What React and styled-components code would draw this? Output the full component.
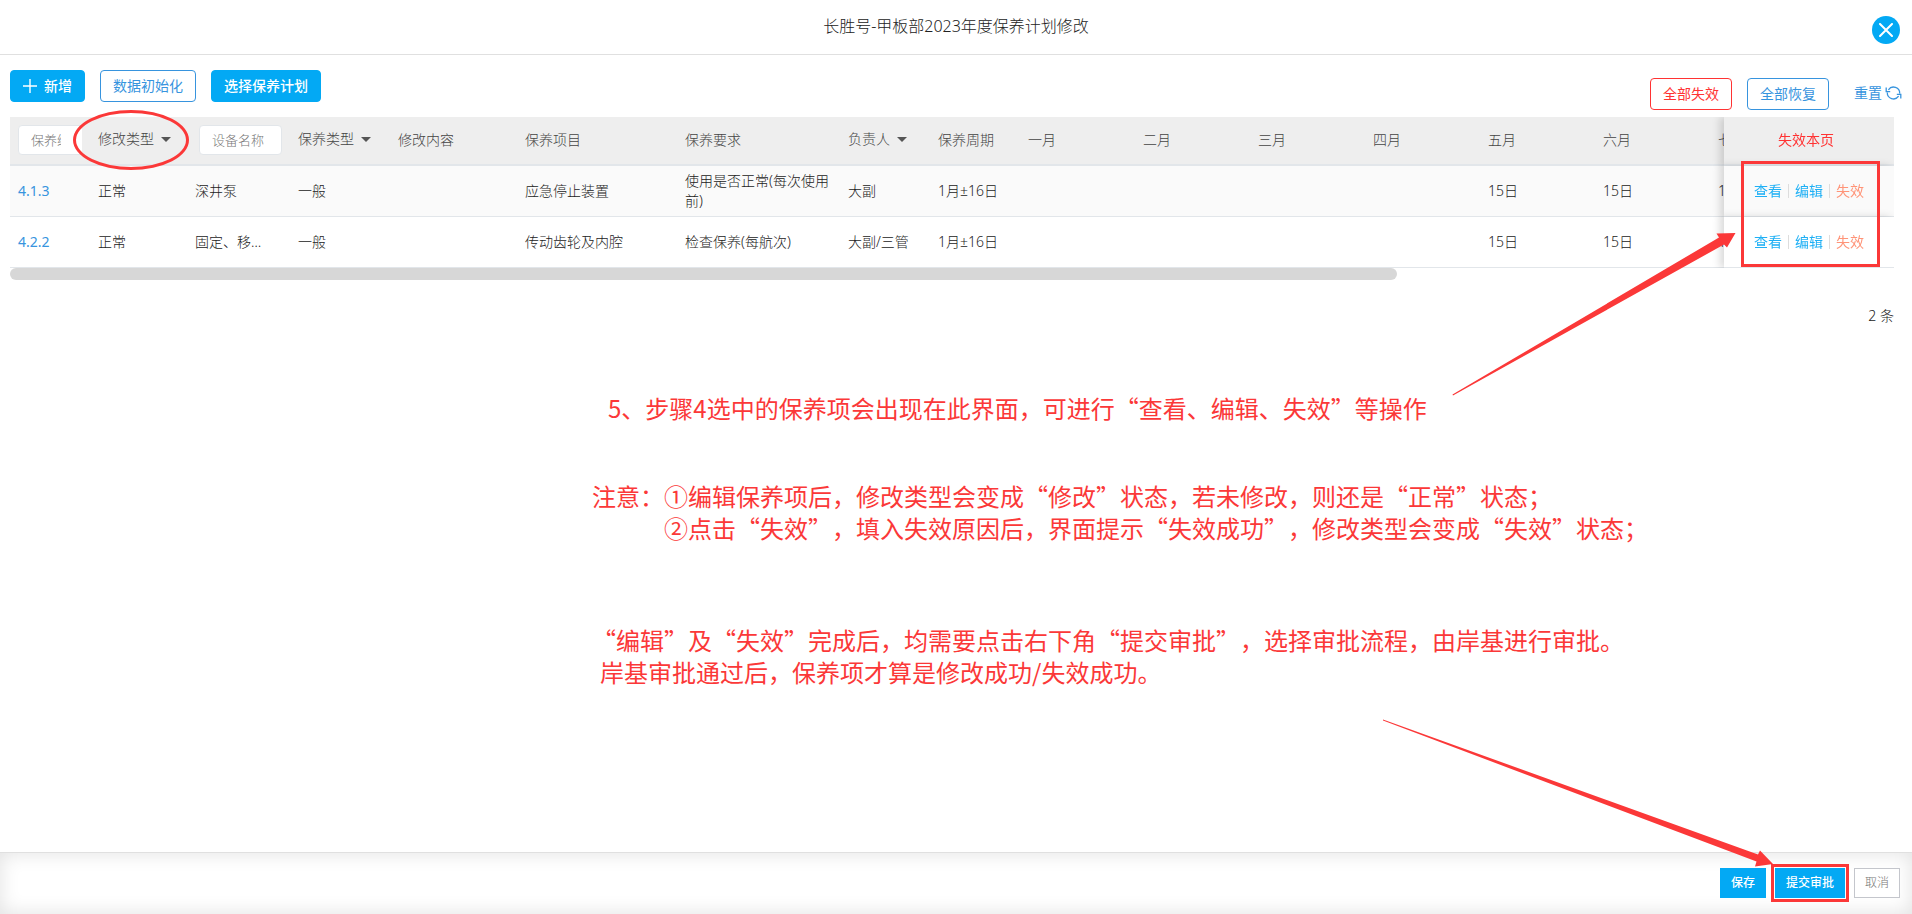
import React from 'react';
import styled, { createGlobalStyle, css } from 'styled-components';

const RED = '#fb3838';
const BLUE = '#03a9f4';
const LINK = '#3794de';

const GlobalStyle = createGlobalStyle`
    * {
        box-sizing: border-box;
    }
    body {
        margin: 0;
        background: #fff;
        color: #222;
        font-family: "Noto Sans", "Noto Sans CJK SC", sans-serif;
        font-size: 14px;
        font-weight: 300;
        line-height: 20px;
    }
    button, input {
        font: inherit;
    }
    button {
        cursor: pointer;
    }
    a {
        text-decoration: none;
    }
`;

const Page = styled.div`
    position: relative;
    display: flex;
    flex-direction: column;
    min-height: 100vh;
`;

const Header = styled.header`
    display: grid;
    grid-template-columns: 1fr auto 1fr;
    align-items: center;
    height: 55px;
    padding: 6px 12px 0;
    border-bottom: 1px solid #e0e0e0;
`;

const Title = styled.h1`
    grid-column: 2;
    margin: 0 0 8px;
    font-size: 16px;
    font-weight: 300;
    line-height: 24px;
`;

const CloseButton = styled.button`
    display: flex;
    align-items: center;
    justify-content: center;
    justify-self: end;
    width: 28px;
    height: 28px;
    padding: 0;
    border: 0;
    border-radius: 50%;
    background: ${ BLUE };
`;

const Main = styled.main`
    flex: 1;
    padding: 15px 18px 0 10px;
`;

const Toolbar = styled.div`
    display: flex;
    justify-content: space-between;
    height: 47px;
    margin-right: -8px;
`;

const ButtonGroup = styled.div`
    display: flex;
    align-items: center;
    align-self: ${ ({ $low }) => $low ? 'flex-end' : 'flex-start' };
    gap: 15px;
    padding-bottom: ${ ({ $low }) => $low ? 7 : 0 }px;
`;

const Button = styled.button`
    display: flex;
    align-items: center;
    gap: 7px;
    height: 32px;
    padding: 0 12px;
    border: 1px solid currentColor;
    border-radius: 4px;
    background: #fff;
    color: ${ ({ $color }) => $color || LINK };
    font-weight: 400;
    ${ ({ $filled }) => $filled && css`
        border-color: ${ BLUE };
        background: ${ BLUE };
        color: #fff;
        font-weight: 500;
    ` }
`;

const ResetLink = styled.a`
    display: flex;
    align-items: center;
    gap: 3px;
    margin: 0 0 2px 10px;
    color: ${ LINK };
    font-weight: 400;
`;

const TableArea = styled.div`
    position: relative;
`;

const Scroller = styled.div`
    overflow-x: auto;
    scrollbar-width: none;
`;

const Table = styled.table`
    width: 2560px;
    table-layout: fixed;
    border-collapse: separate;
    border-spacing: 0;
    text-align: left;
`;

const HeadCell = styled.th`
    height: 49px;
    padding: 0 8px 1px;
    border-bottom: 2px solid #e2e6ea;
    background: #eee;
    color: #444;
    font-weight: 300;
    white-space: nowrap;
`;

const Cell = styled.td`
    height: 51px;
    padding: 0 8px;
    border-bottom: 1px solid #e2e6ea;
    background: ${ ({ $odd }) => $odd ? '#fafafa' : '#fff' };
`;

const sticky = css`
    position: sticky;
    right: 0;
    box-shadow: -4px 0 8px rgba(0, 0, 0, .15);
`;

const StickyHead = styled(HeadCell)`
    ${ sticky }
    padding-right: 14px;
    text-align: center;
`;

const StickyCell = styled(Cell)`
    ${ sticky }
`;

const Ellipsis = styled.div`
    width: 70px;
    overflow: hidden;
    text-overflow: ellipsis;
    white-space: nowrap;
`;

const Clip = styled.div`
    overflow: hidden;
`;

const FilterInput = styled.input`
    display: block;
    width: ${ ({ $width }) => $width }px;
    height: 30px;
    margin-left: ${ ({ $indent }) => $indent || 0 }px;
    padding: 0 ${ ({ $padEnd }) => $padEnd || 12 }px 0 12px;
    border: 1px solid #e2e6ea;
    border-radius: 4px;
    background: #fff;
    font-size: 13px;
    &::placeholder {
        color: #777;
        opacity: 1;
    }
`;

const SortButton = styled.button`
    display: flex;
    align-items: center;
    gap: 7px;
    margin-bottom: 2px;
    padding: 0;
    border: 0;
    background: none;
    color: inherit;
    &::after {
        content: '';
        border: 5px solid transparent;
        border-top-color: #555;
        border-bottom: 0;
    }
`;

const TextButton = styled.button`
    padding: 0;
    border: 0;
    background: none;
    color: #f33;
    font-weight: 400;
`;

const CodeLink = styled.a`
    color: ${ LINK };
    font-weight: 400;
`;

const Actions = styled.div`
    display: flex;
    align-items: center;
    justify-content: center;
`;

const Action = styled.a`
    padding: 0 6px;
    color: ${ ({ $danger }) => $danger ? '#ff9478' : '#1fb0f5' };
    font-weight: 400;
    line-height: 14px;
    & + & {
        border-left: 1px solid #ddd;
    }
`;

const ScrollThumb = styled.div`
    width: 73.6%;
    height: 12px;
    border-radius: 6px;
    background: #d7d7d7;
`;

const Total = styled.p`
    margin: 26px 0 0;
    text-align: right;
`;

const Ring = styled.div`
    position: absolute;
    top: -7px;
    left: 63px;
    width: 116px;
    height: 60px;
    border: 3px solid ${ RED };
    border-radius: 50%;
    pointer-events: none;
`;

const Frame = styled.div`
    position: absolute;
    top: 44px;
    right: 14px;
    bottom: 13px;
    width: 139px;
    border: 3px solid ${ RED };
    pointer-events: none;
`;

const Notes = styled.section`
    padding: 66px 0 0 582px;
    color: ${ RED };
    font-family: "Noto Sans CJK SC", sans-serif;
    font-size: 24px;
    font-weight: 400;
    line-height: 32px;
    text-spacing-trim: space-all;
`;

const Note = styled.p`
    margin: 0 0 ${ ({ $gap }) => $gap || 0 }px;
    padding-left: ${ ({ $indent }) => $indent || 0 }px;
    white-space: nowrap;
`;

const Arrows = styled.svg`
    position: absolute;
    top: 0;
    right: 0;
    pointer-events: none;
`;

const Footer = styled.footer`
    display: flex;
    align-items: flex-start;
    justify-content: flex-end;
    gap: 9px;
    height: 62px;
    padding: 15px 12px 0;
    border-top: 1px solid #e0e0e0;
    box-shadow: inset 0 0 20px rgba(0, 0, 0, .12);
`;

const FooterButton = styled.button`
    height: 30px;
    padding: 0 10px;
    border: 1px solid ${ ({ $plain }) => $plain ? '#c4c6cc' : BLUE };
    background: ${ ({ $plain }) => $plain ? '#fff' : BLUE };
    color: ${ ({ $plain }) => $plain ? '#777' : '#fff' };
    font-size: 12px;
    font-weight: ${ ({ $plain }) => $plain ? 300 : 500 };
    ${ ({ $marked }) => $marked && css`
        outline: 3px solid ${ RED };
        outline-offset: 1px;
    ` }
`;

const months = [ '一月', '二月', '三月', '四月', '五月', '六月', '七月', '八月', '九月', '十月', '十一月', '十二月' ];

const widths = [ 80, 97, 103, 100, 127, 160, 163, 90, 90, ...months.map(() => 115), 170 ];

const rows = [
    {
        code: '4.1.3',
        device: '深井泵',
        item: '应急停止装置',
        requirement: '使用是否正常(每次使用前)',
        owner: '大副',
        due: [ '五月', '六月', '七月' ],
    },
    {
        code: '4.2.2',
        device: '固定、移动式',
        item: '传动齿轮及内腔',
        requirement: '检查保养(每航次)',
        owner: '大副/三管',
        due: [ '五月', '六月', '七月' ],
    },
];

const PlusIcon = () => (
    <svg width="14" height="14" viewBox="0 0 14 14" stroke="#fff" strokeWidth="1.4" aria-hidden="true">
        <path d="M7 0v14M0 7h14"/>
    </svg>
);

const CloseIcon = () => (
    <svg width="14" height="14" viewBox="0 0 14 14" stroke="#fff" strokeWidth="2" strokeLinecap="round" aria-hidden="true">
        <path d="M1 1l12 12M13 1L1 13"/>
    </svg>
);

const RefreshIcon = () => (
    <svg width="17" height="16" viewBox="0 0 17 16" fill="none" stroke="currentColor" strokeWidth="1.3" aria-hidden="true">
        <path d="M3.4 4.8A6.2 6.2 0 0 1 14.7 8.6M1.2 2.6v4h4"/>
        <path d="M13.6 11.2A6.2 6.2 0 0 1 2.3 7.4M15.8 13.4v-4h-4"/>
    </svg>
);

const MaintenanceTable = () => (
    <Table>
        <colgroup>
            { widths.map((width, i) => <col key={ i } width={ width }/>) }
        </colgroup>
        <thead>
            <tr>
                <HeadCell>
                    <Clip><FilterInput $width={ 74 } $padEnd={ 30 } placeholder="保养编号" aria-label="保养编号"/></Clip>
                </HeadCell>
                <HeadCell><SortButton>修改类型</SortButton></HeadCell>
                <HeadCell><FilterInput $width={ 83 } $indent={ 4 } placeholder="设备名称" aria-label="设备名称"/></HeadCell>
                <HeadCell><SortButton>保养类型</SortButton></HeadCell>
                <HeadCell>修改内容</HeadCell>
                <HeadCell>保养项目</HeadCell>
                <HeadCell>保养要求</HeadCell>
                <HeadCell><SortButton>负责人</SortButton></HeadCell>
                <HeadCell>保养周期</HeadCell>
                { months.map(month => <HeadCell key={ month }>{ month }</HeadCell>) }
                <StickyHead><TextButton>失效本页</TextButton></StickyHead>
            </tr>
        </thead>
        <tbody>
            { rows.map((row, i) => (
                <tr key={ row.code }>
                    <Cell $odd={ i % 2 === 0 }><CodeLink href="#">{ row.code }</CodeLink></Cell>
                    <Cell $odd={ i % 2 === 0 }>正常</Cell>
                    <Cell $odd={ i % 2 === 0 }><Ellipsis>{ row.device }</Ellipsis></Cell>
                    <Cell $odd={ i % 2 === 0 }>一般</Cell>
                    <Cell $odd={ i % 2 === 0 }/>
                    <Cell $odd={ i % 2 === 0 }>{ row.item }</Cell>
                    <Cell $odd={ i % 2 === 0 }>{ row.requirement }</Cell>
                    <Cell $odd={ i % 2 === 0 }>{ row.owner }</Cell>
                    <Cell $odd={ i % 2 === 0 }>1月±16日</Cell>
                    { months.map(month => (
                        <Cell key={ month } $odd={ i % 2 === 0 }>{ row.due.includes(month) && '15日' }</Cell>
                    )) }
                    <StickyCell $odd={ i % 2 === 0 }>
                        <Actions>
                            <Action href="#">查看</Action>
                            <Action href="#">编辑</Action>
                            <Action href="#" $danger>失效</Action>
                        </Actions>
                    </StickyCell>
                </tr>
            )) }
        </tbody>
    </Table>
);

const App = () => (
    <Page>
        <GlobalStyle/>
        <Header>
            <Title>长胜号-甲板部2023年度保养计划修改</Title>
            <CloseButton aria-label="关闭"><CloseIcon/></CloseButton>
        </Header>
        <Main>
            <Toolbar>
                <ButtonGroup>
                    <Button $filled><PlusIcon/>新增</Button>
                    <Button>数据初始化</Button>
                    <Button $filled>选择保养计划</Button>
                </ButtonGroup>
                <ButtonGroup $low>
                    <Button $color="#f33">全部失效</Button>
                    <Button>全部恢复</Button>
                    <ResetLink href="#">重置<RefreshIcon/></ResetLink>
                </ButtonGroup>
            </Toolbar>
            <TableArea>
                <Scroller><MaintenanceTable/></Scroller>
                <ScrollThumb/>
                <Ring/>
                <Frame/>
            </TableArea>
            <Total>2 条</Total>
            <Notes>
                <Note $indent={ 16 } $gap={ 56 }>5、步骤4选中的保养项会出现在此界面，可进行“查看、编辑、失效”等操作</Note>
                <Note>注意：①编辑保养项后，修改类型会变成“修改”状态，若未修改，则还是“正常”状态；</Note>
                <Note $indent={ 72 } $gap={ 80 }>②点击“失效”，填入失效原因后，界面提示“失效成功”，修改类型会变成“失效”状态；</Note>
                <Note>“编辑”及“失效”完成后，均需要点击右下角“提交审批”，选择审批流程，由岸基进行审批。</Note>
                <Note $indent={ 8 }>岸基审批通过后，保养项才算是修改成功/失效成功。</Note>
            </Notes>
        </Main>
        <Footer>
            <FooterButton>保存</FooterButton>
            <FooterButton $marked>提交审批</FooterButton>
            <FooterButton $plain>取消</FooterButton>
        </Footer>
        <Arrows width="560" height="914" viewBox="1352 0 560 914" fill={ RED } aria-hidden="true">
            <path d="M1452.5 394.5L1719 237.5L1716.5 233.5L1735.5 233L1727 247.5L1724 244.5L1453 395.5Z"/>
            <path d="M1383 719.5L1758 854.5L1760 850.5L1773 864L1755 866.5L1756.5 861.5L1383 720.5Z"/>
        </Arrows>
    </Page>
);

export default App;
